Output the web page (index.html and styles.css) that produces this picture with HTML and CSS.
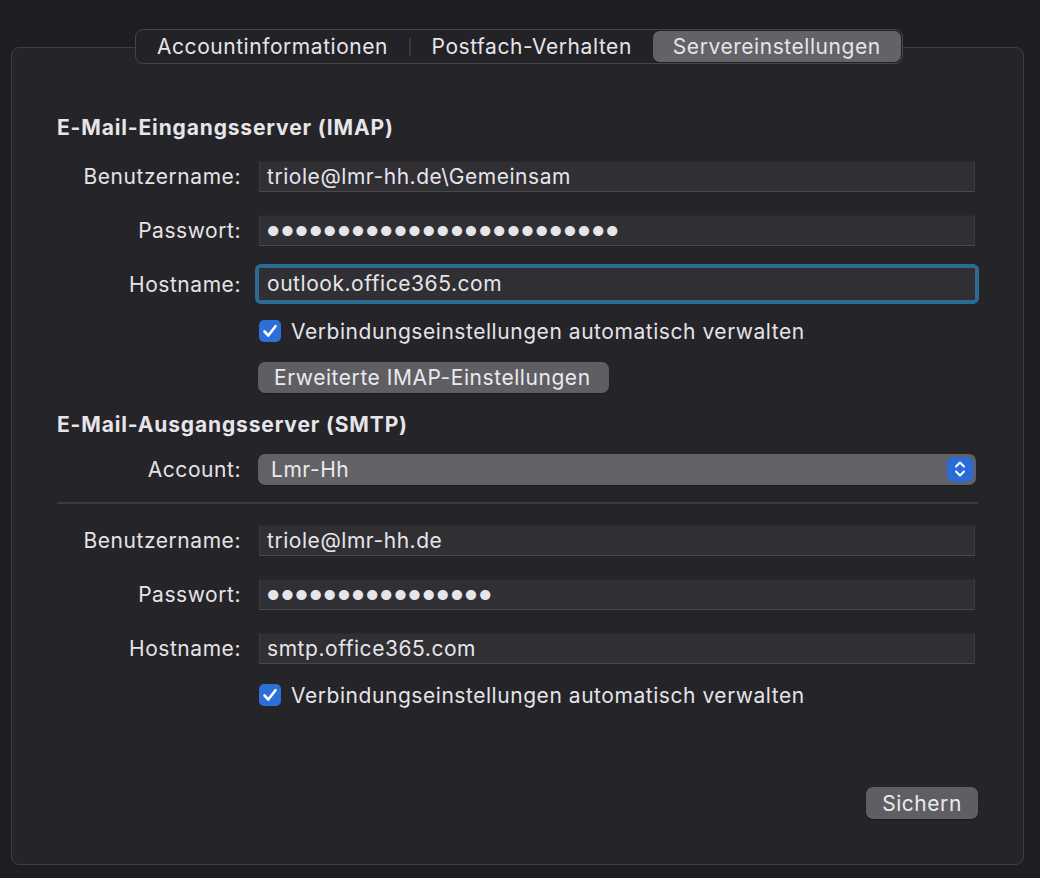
FILE: index.html
```html
<!DOCTYPE html>
<html lang="de">
<head>
<meta charset="utf-8">
<link rel="stylesheet" href="styles.css">
</head>
<body>
<div class="window">
  <div class="panel">
    <div class="tabs">
      <div class="tab">Accountinformationen</div>
      <div class="tab-sep"></div>
      <div class="tab">Postfach-Verhalten</div>
      <div class="tab active">Servereinstellungen</div>
    </div>

    <h2 class="heading first">E-Mail-Eingangsserver (IMAP)</h2>
    <div class="form">
      <div class="row"><label class="lbl">Benutzername:</label><div class="field">triole@lmr-hh.de\Gemeinsam</div></div>
      <div class="row"><label class="lbl">Passwort:</label><div class="field dots">●●●●●●●●●●●●●●●●●●●●●●●●●</div></div>
      <div class="row"><label class="lbl">Hostname:</label><div class="focus"><div class="field">outlook.office365.com</div></div></div>
      <div class="row check-row"><span class="lbl"></span><div class="check"><span class="box"><svg viewBox="0 0 22 22" width="22" height="22"><path d="M5.5 11.5 L9.3 15.5 L16.5 6.2" fill="none" stroke="#fff" stroke-width="2.6" stroke-linecap="round" stroke-linejoin="round"/></svg></span>Verbindungseinstellungen automatisch verwalten</div></div>
      <div class="row btn-row"><span class="lbl"></span><div class="button">Erweiterte IMAP-Einstellungen</div></div>
    </div>

    <h2 class="heading second">E-Mail-Ausgangsserver (SMTP)</h2>
    <div class="form">
      <div class="row"><label class="lbl">Account:</label><div class="popup"><span>Lmr-Hh</span><span class="stepper"><svg viewBox="0 0 26 26" width="26" height="26"><path d="M9 10.5 L13 6.5 L17 10.5 M9 15.5 L13 19.5 L17 15.5" fill="none" stroke="#fff" stroke-width="2" stroke-linecap="round" stroke-linejoin="round"/></svg></span></div></div>
    </div>
    <div class="divider"></div>
    <div class="form">
      <div class="row"><label class="lbl">Benutzername:</label><div class="field">triole@lmr-hh.de</div></div>
      <div class="row"><label class="lbl">Passwort:</label><div class="field dots">●●●●●●●●●●●●●●●●</div></div>
      <div class="row"><label class="lbl">Hostname:</label><div class="field">smtp.office365.com</div></div>
      <div class="row check-row"><span class="lbl"></span><div class="check"><span class="box"><svg viewBox="0 0 22 22" width="22" height="22"><path d="M5.5 11.5 L9.3 15.5 L16.5 6.2" fill="none" stroke="#fff" stroke-width="2.6" stroke-linecap="round" stroke-linejoin="round"/></svg></span>Verbindungseinstellungen automatisch verwalten</div></div>
    </div>

    <div class="footer"><div class="button save">Sichern</div></div>
  </div>
</div>
</body>
</html>
```
FILE: styles.css
```css
* { box-sizing: border-box; }
html, body { margin: 0; padding: 0; }
body {
  background: #1e1d22;
  font-family: Inter, "Noto Sans", sans-serif;
  color: #e4e3e8;
  font-size: 21px;
  letter-spacing: 0.55px;
  width: 1040px;
  height: 878px;
  overflow: hidden;
}
.window { padding: 47px 16px 13px 11px; height: 878px; }
.panel {
  position: relative;
  height: 818px;
  width: 1013px;
  background: #252429;
  border: 1.5px solid #3e3d42;
  border-radius: 8px;
  padding: 0 46px 0 45px;
}
.tabs {
  position: absolute;
  top: -19px;
  left: 123px;
  display: flex;
  align-items: center;
  height: 35px;
  background: #232227;
  border: 1.5px solid #45444a;
  border-radius: 8px;
  padding: 0 1px 0 0;
}
.tab {
  padding: 0 21px;
  height: 31px;
  line-height: 31px;
  color: #e6e5ea;
  white-space: nowrap;
}
.tab-sep { width: 1.5px; height: 18px; background: #3a393e; }
.tab.active {
  background: #636267;
  border-radius: 7px;
  padding: 0 20px;
}
.heading {
  margin: 0;
  font-size: 21px;
  letter-spacing: 0.85px;
  font-weight: 700;
  color: #e6e5ea;
  height: 26px;
  line-height: 26px;
}
.heading.first { margin-top: 67px; }
.heading.second { margin-top: 8px; }
.form { display: flex; flex-direction: column; }
.form .row { display: flex; align-items: center; height: 54px; }
.heading.first + .form { margin-top: 8px; }
.lbl {
  width: 184px;
  text-align: right;
  margin-right: 18px;
  flex: none;
  color: #e4e3e8;
  white-space: nowrap;
}
.field {
  width: 716px;
  height: 31px;
  background: #302f34;
  border: 1px solid #3d3c41;
  border-top-color: #2a292e;
  border-bottom-color: #4a494e;
  padding: 0 7px;
  line-height: 30px;
  color: #e6e5ea;
  white-space: nowrap;
}
.dots { letter-spacing: 1.7px; font-size: 13.6px; }
.focus {
  margin-left: -4px;
  padding: 4px;
  border-radius: 6px;
  background: #2b6c93;
}
.focus .field { border-color: #2f2e33; height: 32px; width: 716px; }
.form .check-row { height: 40px; margin-top: 0; }
.check { display: flex; align-items: center; gap: 10px; }
.box {
  width: 22px; height: 22px;
  border-radius: 5px;
  background: #2d6fd8;
  display: inline-flex;
  flex: none;
}
.form .btn-row { height: 54px; margin-top: -1px; }
.button {
  display: inline-flex;
  align-items: center;
  height: 31px;
  padding: 0 16px;
  background: #5f5e63;
  border-radius: 7px;
  color: #ebeaef;
  box-shadow: 0 1px 1px rgba(0,0,0,.3);
  white-space: nowrap;
}
.btn-row .button { margin-left: -1px; width: 351px; }
.heading.second + .form { margin-top: 4px; }
.popup {
  margin-left: -1px;
  width: 718px;
  height: 31px;
  background: #626166;
  border-radius: 7px;
  display: flex;
  align-items: center;
  justify-content: space-between;
  padding: 0 3px 0 13px;
  color: #ebeaef;
  box-shadow: 0 1px 1px rgba(0,0,0,.3);
}
.stepper {
  width: 26px; height: 25px;
  background: #2a6ad9;
  border-radius: 6px;
  display: inline-flex;
  align-items: center;
  justify-content: center;
  overflow: hidden;
}
.divider { height: 2px; background: #3b3a3f; margin: 6px 0 9px; width: 921px; }
.footer { display: flex; justify-content: flex-end; margin-top: 72px; }
.button.save { width: 112px; justify-content: center; height: 32px; margin-right: -1px; }
```
